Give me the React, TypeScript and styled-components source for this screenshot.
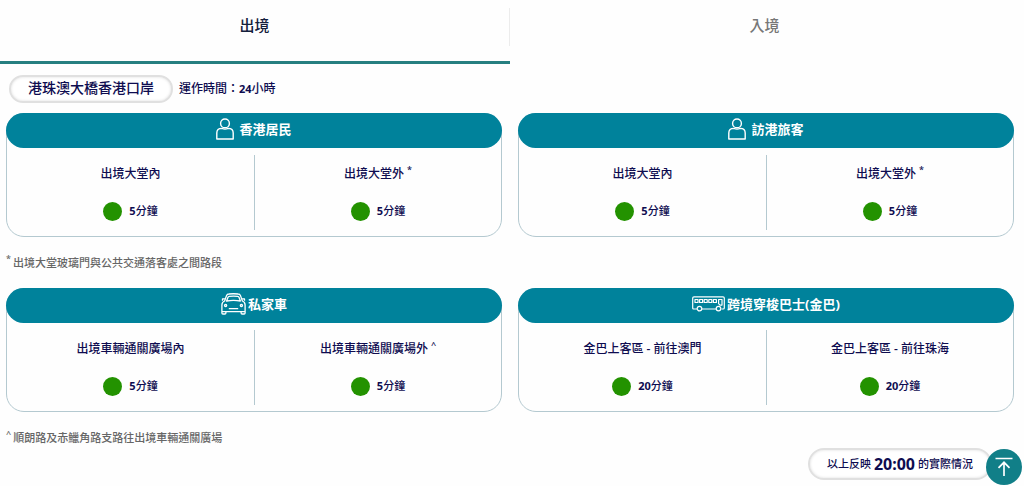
import React from "react";
import styled, { createGlobalStyle } from "styled-components";

const GlobalStyle = createGlobalStyle`
  * { box-sizing: border-box; }
  body {
    margin: 0;
    background: #fefefe;
    color: #0e0c50;
    font-family: "Noto Sans", "Noto Sans CJK TC", sans-serif;
    font-size: 12px;
    font-weight: 500;
    line-height: 20px;
  }
`;

const Page = styled.main`
  position: relative;
  overflow: hidden;
`;

const Tabs = styled.nav`
  display: grid;
  grid-template-columns: 1fr 1fr;
  padding-right: 4px;
`;

const Tab = styled.button<{ $active?: boolean }>`
  display: flex;
  align-items: flex-start;
  justify-content: center;
  height: 64px;
  padding: 8px 0 0;
  border: 0;
  border-bottom: 3px solid ${(p) => (p.$active ? "#267f80" : "transparent")};
  background: none;
  color: ${(p) => (p.$active ? "#14203c" : "#777")};
  font: inherit;
  font-size: 15px;
  line-height: 34px;
`;

const TabLabel = styled.span<{ $divided?: boolean }>`
  flex: 1;
  height: 38px;
  border-right: 1px solid ${(p) => (p.$divided ? "#ececec" : "transparent")};
`;

const Pill = styled.div`
  display: inline-flex;
  align-items: center;
  justify-content: center;
  border: 2px solid #e0e0e0;
  border-radius: 16px;
  background: #fff;
  box-shadow: inset 0 0 3px #ddd;
`;

const PortBar = styled.header`
  display: flex;
  align-items: center;
  gap: 6px;
  padding: 11px 9px 10px;
`;

const PortName = styled(Pill).attrs({ as: "h1" })`
  height: 28px;
  margin: 0;
  padding: 0 17px 2px;
  font-size: 14px;
  font-weight: 500;
`;

const Hours = styled.p`
  margin: 0;
`;

const Digits = styled.b`
  font-size: 11px;
`;

const Section = styled.section`
  padding: 0 10px 0 6px;
  & + & { margin-top: 15px; }
`;

const Cards = styled.div`
  display: grid;
  grid-template-columns: 1fr 1fr;
  gap: 16px;
`;

const CardBox = styled.article`
  height: 124px;
  border: 1px solid #b4c9d0;
  border-radius: 18px;
`;

const CardTitle = styled.h2<{ $gap: number }>`
  display: flex;
  align-items: center;
  justify-content: center;
  gap: ${(p) => p.$gap}px;
  height: 35px;
  margin: -1px -1px 0;
  padding-bottom: 4px;
  border-radius: 18px;
  background: #00829b;
  color: #fff;
  font-size: 13px;
  font-weight: 700;
`;

const Halls = styled.div`
  display: grid;
  grid-template-columns: 1fr 1fr;
  padding-top: 7px;
`;

const HallBox = styled.div`
  display: flex;
  flex-direction: column;
  align-items: center;
  height: 75px;
  padding-top: 9px;
  gap: 17px;
  & + & { border-left: 1px solid #b4c9d0; }
`;

const Mark = styled.sup`
  margin-left: 3px;
  font-size: 9px;
  line-height: 0;
`;

const Wait = styled.div`
  display: flex;
  align-items: center;
  gap: 7px;
  font-size: 11px;
`;

const Dot = styled.span`
  width: 19px;
  height: 19px;
  border-radius: 50%;
  background: #239200;
`;

const Note = styled.p`
  margin: 16px 0 0;
  color: #666;
  font-size: 11px;
`;

const Footer = styled.footer`
  display: flex;
  justify-content: flex-end;
  padding: 0 32px 6px 0;
`;

const Updated = styled(Pill)`
  gap: 3px;
  height: 32px;
  padding: 0 17px;
  font-size: 11px;
`;

const Time = styled.time`
  font-size: 16px;
  font-weight: 700;
`;

const TopButton = styled.button`
  position: absolute;
  right: 2px;
  bottom: 1px;
  width: 36px;
  height: 36px;
  padding: 0;
  border: 0;
  border-radius: 50%;
  background: #117f88;
  svg { display: block; }
`;

const iconProps = { fill: "none", stroke: "#fff", "aria-hidden": true } as const;

const PersonIcon = () => (
  <svg width="18" height="22" viewBox="0 0 18 22" {...iconProps} strokeWidth="1.4" strokeLinejoin="round">
    <circle cx="9" cy="5.4" r="4.4" />
    <path d="M5.8 10.4Q.8 10.4.8 15v6h16.400v-6q0-4.600-5-4.600Q9 11.800 5.800 10.400" />
  </svg>
);

const CarIcon = () => (
  <svg width="25" height="22" viewBox="0 0 25 22" {...iconProps} strokeWidth="1.3" strokeLinejoin="round">
    <path d="M3.600 8 5.600 2.400Q6.100 1.100 8 1q4.500-.5 9 0 1.900.1 2.400 1.400L21.400 8q2.700 1 2.700 4v8q0 1-1 1h-2q-1 0-1-1v-1.400H4.900V20q0 1-1 1h-2q-1 0-1-1v-8q0-3 2.700-4z" />
    <path d="M5.600 8 7 4.200q.3-.8 1.200-.9 4.300-.4 8.600 0 .9.1 1.200.9L19.400 8q-6.900-1.400-13.800 0zM3.900 5.900H1.500v1.800M21.100 5.900h2.400v1.800M7.800 15.700h9.400M1 18.600h4M20 18.600h4" />
    <circle cx="4.600" cy="12.600" r="1.100" />
    <circle cx="20.400" cy="12.600" r="1.100" />
  </svg>
);

const BusIcon = () => (
  <svg width="33" height="16" viewBox="0 0 33 16" {...iconProps} strokeWidth="1.2" strokeLinejoin="round">
    <path d="M5 13H1.800Q.7 13 .7 12V2Q.7.800 2 .8h29Q32.300.800 32.300 2v10q0 1-1.100 1h-1.700M10 13h14.500" />
    <circle cx="7.500" cy="12.600" r="2.300" />
    <circle cx="26.500" cy="12.600" r="2.300" />
    <path d="M3 3.500h3v3H3zM7.600 3.500h3v3h-3zM12.200 3.500h3v3h-3zM16.800 3.500h3v3h-3zM21.400 3.500h3v3h-3zM26.600 3.500h3.400v5.600H28L26.600 7.600z" />
  </svg>
);

const TopIcon = () => (
  <svg width="36" height="36" viewBox="0 0 36 36" {...iconProps} strokeWidth="1.7">
    <path d="M9.500 9.500h17M18 27V13.500M12.500 18.800 18 13.300l5.500 5.500" />
  </svg>
);

interface HallData {
  name: string;
  mark?: string;
  minutes: number;
}

interface CardProps {
  icon: React.ReactNode;
  gap: number;
  title: string;
  halls: HallData[];
}

const Card = ({ icon, gap, title, halls }: CardProps) => (
  <CardBox>
    <CardTitle $gap={gap}>
      {icon}
      {title}
    </CardTitle>
    <Halls>
      {halls.map((hall) => (
        <HallBox key={hall.name}>
          <div>
            {hall.name}
            {hall.mark && <Mark>{hall.mark}</Mark>}
          </div>
          <Wait>
            <Dot />
            <span>
              <Digits>{hall.minutes}</Digits>分鐘
            </span>
          </Wait>
        </HallBox>
      ))}
    </Halls>
  </CardBox>
);

const passengerHalls: HallData[] = [
  { name: "出境大堂內", minutes: 5 },
  { name: "出境大堂外", mark: "*", minutes: 5 },
];

const carHalls: HallData[] = [
  { name: "出境車輛通關廣場內", minutes: 5 },
  { name: "出境車輛通關廣場外", mark: "^", minutes: 5 },
];

const busHalls: HallData[] = [
  { name: "金巴上客區 - 前往澳門", minutes: 20 },
  { name: "金巴上客區 - 前往珠海", minutes: 20 },
];

const NoteMark = styled(Mark)`
  margin: 0 2px 0 0;
`;

export default function App() {
  return (
    <Page lang="zh-HK">
      <GlobalStyle />
      <Tabs>
        <Tab type="button" $active>
          <TabLabel $divided>出境</TabLabel>
        </Tab>
        <Tab type="button">
          <TabLabel>入境</TabLabel>
        </Tab>
      </Tabs>
      <PortBar>
        <PortName>港珠澳大橋香港口岸</PortName>
        <Hours>
          運作時間：<Digits>24</Digits>小時
        </Hours>
      </PortBar>
      <Section>
        <Cards>
          <Card icon={<PersonIcon />} gap={5} title="香港居民" halls={passengerHalls} />
          <Card icon={<PersonIcon />} gap={5} title="訪港旅客" halls={passengerHalls} />
        </Cards>
        <Note>
          <NoteMark>*</NoteMark>出境大堂玻璃門與公共交通落客處之間路段
        </Note>
      </Section>
      <Section>
        <Cards>
          <Card icon={<CarIcon />} gap={2} title="私家車" halls={carHalls} />
          <Card icon={<BusIcon />} gap={2} title="跨境穿梭巴士(金巴)" halls={busHalls} />
        </Cards>
        <Note>
          <NoteMark>^</NoteMark>順朗路及赤鱲角路支路往出境車輛通關廣場
        </Note>
      </Section>
      <Footer>
        <Updated>
          以上反映 <Time>20:00</Time> 的實際情況
        </Updated>
      </Footer>
      <TopButton type="button" aria-label="返回頁首">
        <TopIcon />
      </TopButton>
    </Page>
  );
}
